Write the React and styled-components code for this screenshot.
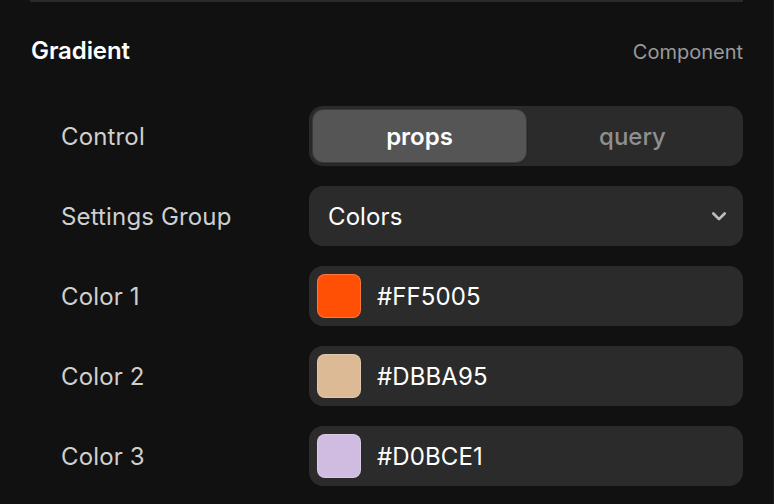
import React, { useState } from 'react';
import styled, { createGlobalStyle } from 'styled-components';

const GlobalStyle = createGlobalStyle`
  html, body {
    margin: 0;
    padding: 0;
    background: #111111;
  }
  body {
    font-family: Inter, "Noto Sans", sans-serif;
    -webkit-font-smoothing: antialiased;
  }
`;

const colors = [
    { label: 'Color 1', value: '#FF5005' },
    { label: 'Color 2', value: '#DBBA95' },
    { label: 'Color 3', value: '#D0BCE1' },
];

const App = () => {
    const [mode, setMode] = useState('props');

    return (
        <>
            <GlobalStyle />
            <Panel>
                <TopBar />
                <Header>
                    <Title>Gradient</Title>
                    <Kind>Component</Kind>
                </Header>
                <Rows>
                    <Row>
                        <Label>Control</Label>
                        <Segmented>
                            {['props', 'query'].map((m) => (
                                <Segment key={m} active={m === mode} onClick={() => setMode(m)}>
                                    {m}
                                </Segment>
                            ))}
                        </Segmented>
                    </Row>
                    <Row>
                        <Label>Settings Group</Label>
                        <Field>
                            <FieldText>Colors</FieldText>
                            <Chevron viewBox="0 0 16 16">
                                <path d="M3.5 6l4.5 4.5L12.5 6" fill="none" stroke="currentColor" strokeWidth="2.2" strokeLinecap="round" strokeLinejoin="round" />
                            </Chevron>
                        </Field>
                    </Row>
                    {colors.map((c) => (
                        <Row key={c.label}>
                            <Label>{c.label}</Label>
                            <Field swatch>
                                <Swatch color={c.value} />
                                <FieldText>{c.value}</FieldText>
                            </Field>
                        </Row>
                    ))}
                </Rows>
            </Panel>
        </>
    );
};

export default App;

const Panel = styled.div`
    width: 774px;
    height: 504px;
    box-sizing: border-box;
    padding: 0 30px 0 30px;
    border-right: 1px solid #1c1c1c;
    overflow: hidden;
`;

const TopBar = styled.div`
    height: 2px;
    background: #2a2a2a;
`;

const Header = styled.div`
    display: flex;
    justify-content: space-between;
    align-items: baseline;
    padding: 34px 0 0 1px;
    height: 72px;
    box-sizing: border-box;
`;

const Title = styled.div`
    color: #ffffff;
    font-size: 24px;
    font-weight: 600;
    letter-spacing: -0.1px;
`;

const Kind = styled.div`
    color: #9a9a9a;
    font-size: 20px;
    font-weight: 400;
`;

const Rows = styled.div`
    display: flex;
    flex-direction: column;
    gap: 20px;
    padding-top: 32px;
`;

const Row = styled.div`
    display: grid;
    grid-template-columns: 279px 1fr;
    align-items: center;
    height: 60px;
`;

const Label = styled.div`
    padding-left: 31px;
    color: #cfcfcf;
    font-size: 24px;
    font-weight: 400;
    letter-spacing: 0.15px;
`;

const Segmented = styled.div`
    display: grid;
    grid-template-columns: 1fr 1fr;
    height: 60px;
    box-sizing: border-box;
    padding: 4px;
    background: #2b2b2b;
    border-radius: 14px;
`;

const Segment = styled.div`
    display: flex;
    align-items: center;
    justify-content: center;
    border-radius: 10px;
    font-size: 24px;
    font-weight: ${(p) => (p.active ? 600 : 500)};
    color: ${(p) => (p.active ? '#ffffff' : '#8f8f8f')};
    background: ${(p) => (p.active ? '#555555' : 'transparent')};
    box-shadow: ${(p) => (p.active ? '0 0 0 1px #3a3a3a, 0 1px 3px rgba(0,0,0,0.35)' : 'none')};
    cursor: pointer;
`;

const Field = styled.div`
    display: flex;
    align-items: center;
    gap: 16px;
    height: 60px;
    box-sizing: border-box;
    padding: 0 14px 0 ${(p) => (p.swatch ? '8px' : '19px')};
    background: #2b2b2b;
    border-radius: 14px;
`;

const FieldText = styled.div`
    flex: 1;
    color: #ffffff;
    font-size: 24px;
    font-weight: 400;
    letter-spacing: 0.1px;
`;

const Swatch = styled.div`
    width: 44px;
    height: 44px;
    box-sizing: border-box;
    border-radius: 8px;
    background: ${(p) => p.color};
    border: 1px solid rgba(255, 255, 255, 0.22);
`;

const Chevron = styled.svg`
    width: 20px;
    height: 20px;
    color: #bdbdbd;
`;
